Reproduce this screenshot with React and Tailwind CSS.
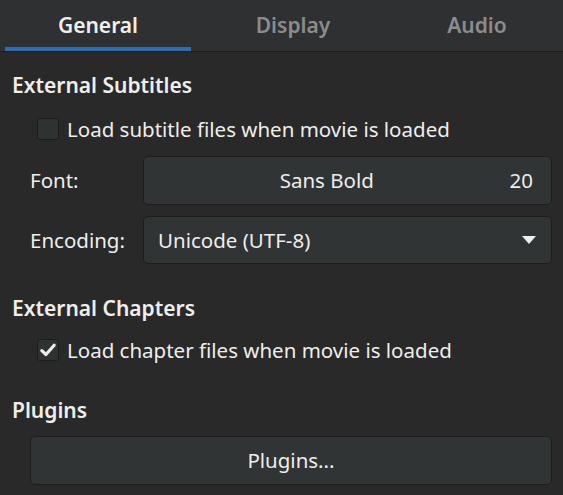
import React from "react";

function Checkbox({ checked }) {
  return (
    <span className="w-[22px] h-[22px] rounded-[3px] border border-[#1c1c1c] bg-[#2f3233] flex items-center justify-center shrink-0">
      {checked && (
        <svg viewBox="0 0 16 16" className="w-[18px] h-[18px]">
          <path d="M2.5 8.5 L6.2 12 L13.5 3.8" fill="none" stroke="#eeeeec" strokeWidth="2.8" strokeLinecap="round" strokeLinejoin="round" />
        </svg>
      )}
    </span>
  );
}

export default function App() {
  return (
    <div className="w-[563px] h-[495px] bg-[#292929] text-[#eeeeec] text-[20.5px] overflow-hidden" style={{ fontFamily: "'Noto Sans', sans-serif" }}>
      {/* Tabs */}
      <div className="h-[52px] bg-[#2e3032] border-b border-[#1f1f1f] flex pl-[5px] text-[21px]">
        <div className="w-[186px] flex items-center justify-center font-semibold border-b-4 border-[#2c6db5] pt-1">General</div>
        <div className="w-[204px] flex items-center justify-center font-semibold text-[#8b8d8d]">Display</div>
        <div className="w-[164px] flex items-center justify-center font-semibold text-[#8b8d8d]">Audio</div>
      </div>

      <div className="pl-[12px] pr-[11px]">
        {/* External Subtitles */}
        <div className="font-semibold text-[21px] mt-[20px] leading-[26px]">External Subtitles</div>
        <div className="flex items-center gap-[8px] ml-[25px] mt-[19px] h-[24px] leading-[24px]">
          <Checkbox checked={false} />
          <span>Load subtitle files when movie is loaded</span>
        </div>

        <div className="grid grid-cols-[113px_1fr] gap-y-[11px] items-center ml-[18px] mt-[15px]">
          <span>Font:</span>
          <button className="h-[49px] rounded-[5px] border border-[#1c1c1c] bg-[#313435] flex items-center pl-[20px] pr-[18px]">
            <span className="flex-1 text-center pr-[20px]">Sans Bold</span>
            <span>20</span>
          </button>
          <span>Encoding:</span>
          <button className="h-[48px] rounded-[5px] border border-[#1c1c1c] bg-[#313435] flex items-center pl-[14px] pr-[15px]">
            <span className="flex-1 text-left">Unicode (UTF-8)</span>
            <svg viewBox="0 0 14 8" className="w-[14px] h-[8px]">
              <path d="M0 0 H14 L7 8 Z" fill="#eeeeec" />
            </svg>
          </button>
        </div>

        {/* External Chapters */}
        <div className="font-semibold text-[21px] mt-[31px] leading-[26px]">External Chapters</div>
        <div className="flex items-center gap-[8px] ml-[25px] mt-[17px] h-[24px] leading-[24px]">
          <Checkbox checked={true} />
          <span>Load chapter files when movie is loaded</span>
        </div>

        {/* Plugins */}
        <div className="font-semibold text-[21px] mt-[35px] leading-[26px]">Plugins</div>
        <div className="ml-[18px] mt-[13px]">
          <button className="w-full h-[49px] rounded-[5px] border border-[#1c1c1c] bg-[#313435] flex items-center justify-center">
            Plugins...
          </button>
        </div>
      </div>
    </div>
  );
}
